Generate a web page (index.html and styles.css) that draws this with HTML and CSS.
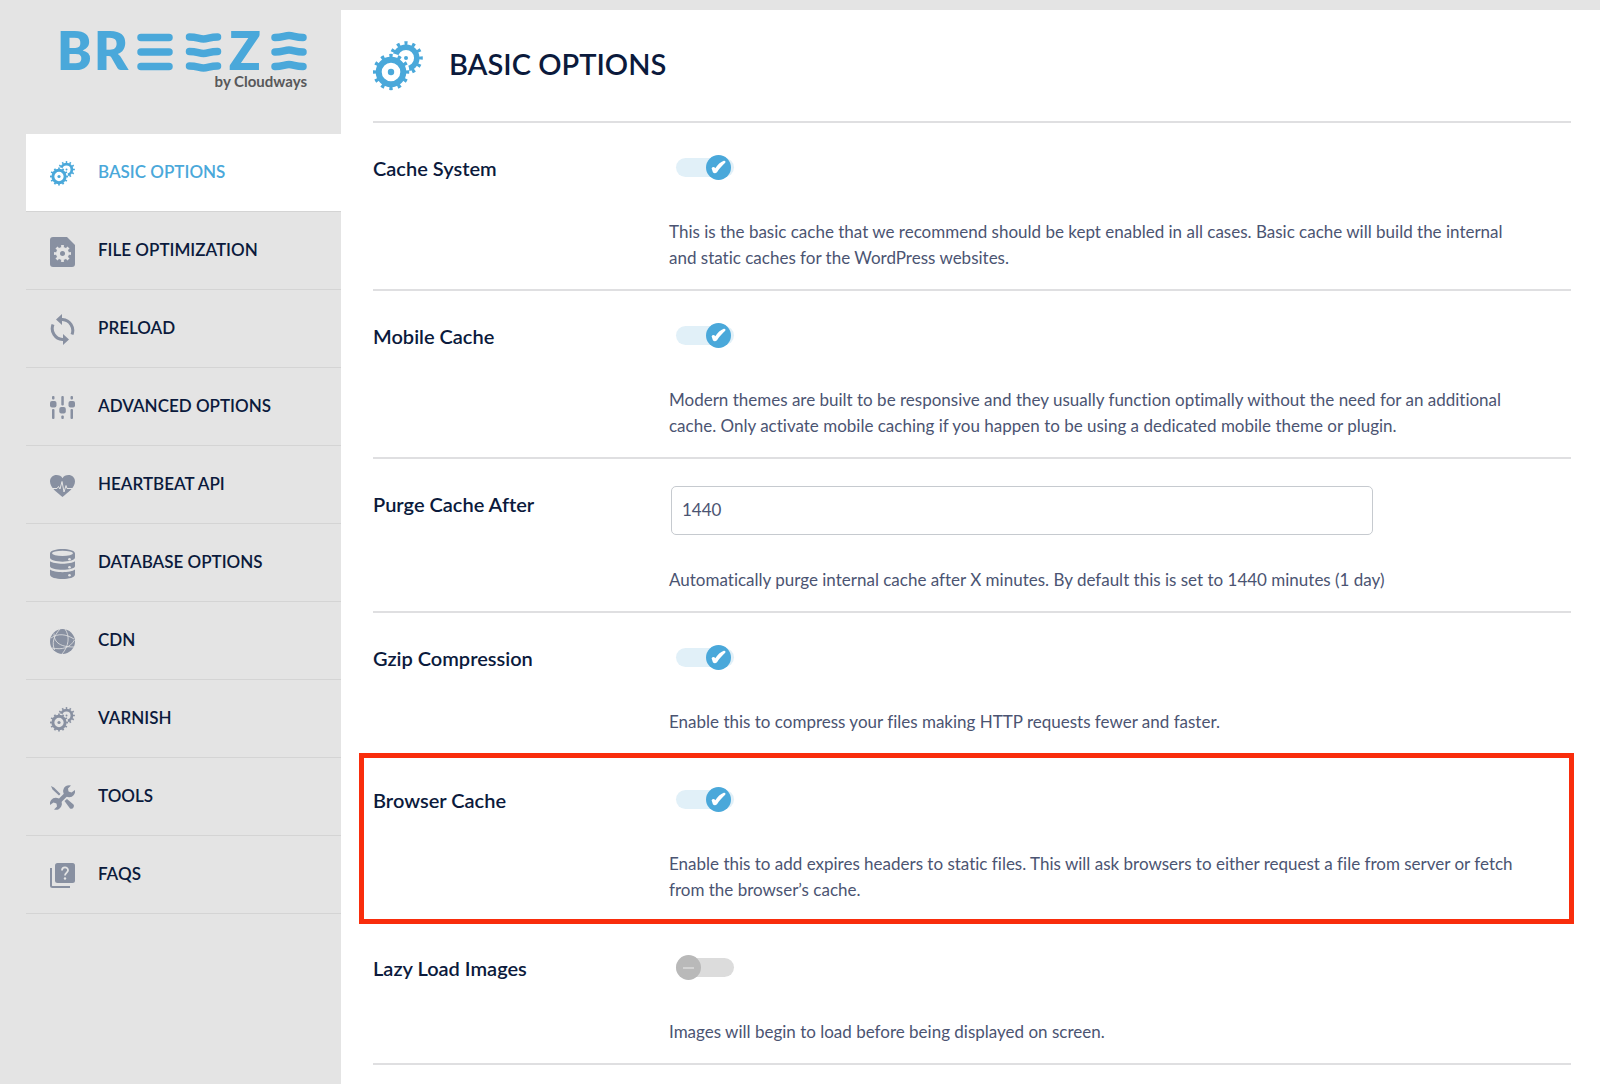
FILE: index.html
```html
<!DOCTYPE html>
<html lang="en">
<head>
<meta charset="utf-8">
<meta name="viewport" content="width=device-width, initial-scale=1">
<title>Breeze – Basic Options</title>
<link rel="stylesheet" href="styles.css">
</head>
<body>
<svg class="sprite" aria-hidden="true">
  <defs>
    <mask id="gear-gap" maskUnits="userSpaceOnUse" x="0" y="0" width="50" height="50">
      <rect width="50" height="50" fill="#fff"/>
      <circle cx="18" cy="31" r="18.500" fill="#000"/>
    </mask>
    <symbol id="gears" viewBox="0 0 50 50">
      <g fill="none" stroke="currentColor">
        <circle cx="18" cy="31" r="12.300" stroke-width="6"/>
        <circle cx="18" cy="31" r="16.200" stroke-width="4" pathLength="120" stroke-dasharray="4 6" stroke-dashoffset="2"/>
        <g mask="url(#gear-gap)">
          <circle cx="33" cy="17" r="10.800" stroke-width="5.500"/>
          <circle cx="33" cy="17" r="14.800" stroke-width="4" pathLength="120" stroke-dasharray="4 6" stroke-dashoffset="2"/>
        </g>
      </g>
      <circle cx="18" cy="31" r="3.200" fill="currentColor"/>
      <circle cx="33" cy="17" r="2" fill="currentColor"/>
    </symbol>
    <symbol id="knob-on" viewBox="0 0 25 25">
      <circle cx="12.500" cy="12.500" r="12.500" fill="#4aa8da"/>
      <path d="M5.600 13.200C6.500 11.600 8.300 11.500 9.300 13.300C11.700 9.500 14.500 7.200 17.800 5.800C19.200 5.400 20 6.600 19.200 7.700C16 10.500 13.500 13.500 11 17.200C9.700 18.800 7.800 18.700 6.900 17.200Z" fill="#fff"/>
    </symbol>
    <symbol id="knob-off" viewBox="0 0 25 25">
      <circle cx="12.500" cy="12.500" r="12.500" fill="#b9b9b9"/>
      <path d="M7 13H18" stroke="#dcdcdc" stroke-width="1.500"/>
    </symbol>
  </defs>
</svg>
<div class="layout">
  <aside class="sidebar">
    <a class="logo" href="#" aria-label="Breeze by Cloudways">
      <svg class="logo-mark" viewBox="0 0 250 42" width="250" height="42" aria-hidden="true">
        <g class="logo-letters">
          <text x="-3" y="38">B</text>
          <text x="34" y="38">R</text>
          <text x="169" y="38">Z</text>
        </g>
        <g fill="none" stroke="#4aa8da" stroke-width="7.500" stroke-linecap="round">
          <path d="M81 5.500H109M81 20H109M81 34.500H109"/>
          <path d="M129.500 5C137 5 139 7 143.500 7S150 5 157.500 5M129.500 19.500C137 19.500 139 21.500 143.500 21.500S150 19.500 157.500 19.500M129.500 34C137 34 139 36 143.500 36S150 34 157.500 34"/>
          <path d="M215 5.500C222.500 5.500 224.500 3.500 229 3.500S235.500 5.500 243 5.500M215 20C222.500 20 224.500 18 229 18S235.500 20 243 20M215 34.500C222.500 34.500 224.500 32.500 229 32.500S235.500 34.500 243 34.500"/>
        </g>
      </svg>
      <span class="logo-by">by Cloudways</span>
    </a>
    <nav class="nav">
      <a class="nav-item active" href="#basic"><svg class="icon" width="25" height="25"><use href="#gears"/></svg><span>BASIC OPTIONS</span></a>
      <a class="nav-item" href="#file"><svg class="icon" viewBox="0 0 25 30" width="25" height="30"><path fill="currentColor" d="M3 0H17L25 8V27A3 3 0 0 1 22 30H3A3 3 0 0 1 0 27V3A3 3 0 0 1 3 0Z"/><circle cx="12.500" cy="16.500" r="4.500" fill="none" stroke="#e4e4e4" stroke-width="4"/><circle cx="12.500" cy="16.500" r="7" fill="none" stroke="#e4e4e4" stroke-width="3" pathLength="80" stroke-dasharray="5 5" stroke-dashoffset="2.500"/></svg><span>FILE OPTIMIZATION</span></a>
      <a class="nav-item" href="#preload"><svg class="icon" viewBox="0 0 25 31" width="25" height="31"><g fill="none" stroke="currentColor" stroke-width="3"><path d="M11 5.500H12.500A11 11 0 0 1 22 20.500"/><path d="M14 25.500H12.500A11 11 0 0 1 3 10.500"/></g><path fill="currentColor" d="M12 0V11L6 5.500ZM13 20V31L19 25.500Z"/></svg><span>PRELOAD</span></a>
      <a class="nav-item" href="#advanced"><svg class="icon" viewBox="0 0 25 23" width="25" height="23"><g fill="currentColor"><rect x="2" width="2.500" height="3.500" rx="1"/><rect y="5" width="6.500" height="6.500" rx="2"/><rect x="2" y="13" width="2.500" height="10" rx="1"/><rect x="11.300" width="2.500" height="9.500" rx="1"/><rect x="9.300" y="11" width="6.500" height="6.500" rx="2"/><rect x="11.300" y="19.500" width="2.500" height="3.500" rx="1"/><rect x="20.500" width="2.500" height="3.500" rx="1"/><rect x="18.500" y="5" width="6.500" height="6.500" rx="2"/><rect x="20.500" y="13" width="2.500" height="10" rx="1"/></g></svg><span>ADVANCED OPTIONS</span></a>
      <a class="nav-item" href="#heartbeat"><svg class="icon" viewBox="0 0 25 22" width="25" height="22"><path fill="currentColor" d="M12.500 22C8 18 0 13 0 6.500C0 2.500 3 0 6.500 0C9 0 11.500 1.200 12.500 3.200C13.500 1.200 16 0 18.500 0C22 0 25 2.500 25 6.500C25 13 17 18 12.500 22Z"/><path fill="none" stroke="#e4e4e4" stroke-width="1" d="M2 13.500H7L8.500 11.500L10 14L12 6.500L14 17L16 10.500L17 13.500H23"/></svg><span>HEARTBEAT API</span></a>
      <a class="nav-item" href="#database"><svg class="icon" viewBox="0 0 25 30" width="25" height="30"><path fill="currentColor" d="M0 4.500C0 -1.500 25 -1.500 25 4.500V8.500C25 14 0 14 0 8.500ZM0 12.200C4 15.500 21 15.500 25 12.200V17C25 22 0 22 0 17ZM0 20.500C4 24 21 24 25 20.500V25.500C25 31.500 0 31.500 0 25.500Z"/><ellipse cx="12.500" cy="4.300" rx="10.500" ry="2.600" fill="#e4e4e4"/><g fill="#e4e4e4"><circle cx="19.500" cy="10.300" r="1.300"/><circle cx="19.500" cy="18.300" r="1.300"/><circle cx="19.500" cy="26.300" r="1.300"/></g></svg><span>DATABASE OPTIONS</span></a>
      <a class="nav-item" href="#cdn"><svg class="icon" viewBox="0 0 25 25" width="25" height="25"><circle cx="12.500" cy="12.500" r="12.500" fill="currentColor"/><g fill="none" stroke="#e4e4e4" stroke-width=".8"><path d="M1 9C8 4 16 5 24 10M4 4.500C4 12 8 18 24 18M15 0C20 7 19 17 12 25M10 0C3 8 2 14 4.500 21M2 19C12 21 20 19 24.500 11"/></g></svg><span>CDN</span></a>
      <a class="nav-item" href="#varnish"><svg class="icon" width="25" height="25"><use href="#gears"/></svg><span>VARNISH</span></a>
      <a class="nav-item" href="#tools"><svg class="icon" viewBox="0 0 25 25" width="25" height="25"><path fill="currentColor" d="M1 1L4 2.500L10.500 9L9 10.500L2.500 4.500ZM14.500 16L17 14L23.500 19.500C25 21.500 22.500 25 20 23.500Z"/><path d="M7 18.500L18.500 7" stroke="currentColor" stroke-width="4"/><path fill="currentColor" d="M21 .500A6 6 0 1 0 25 5L21.500 7.500L18.500 6.500L18 3.500ZM4 24.500A6 6 0 1 0 0 20L3.500 17.500L6.500 18.500L7 21.500Z"/></svg><span>TOOLS</span></a>
      <a class="nav-item" href="#faqs"><svg class="icon" viewBox="0 0 25 25" width="25" height="25"><rect x="5" width="20" height="20" rx="2.500" fill="currentColor"/><path d="M1 5V22.500Q1 24 2.500 24H20" fill="none" stroke="currentColor" stroke-width="2"/><path d="M12 7.500C12 3.500 18 3.500 18 7.300C18 9.500 15 9.700 15 12.500" fill="none" stroke="#e4e4e4" stroke-width="1.800"/><circle cx="15" cy="15.500" r="1.200" fill="#e4e4e4"/></svg><span>FAQS</span></a>
    </nav>
  </aside>
  <main class="main">
    <header class="page-head">
      <svg class="page-icon" width="50" height="50" aria-hidden="true"><use href="#gears"/></svg>
      <h1>BASIC OPTIONS</h1>
    </header>
    <form class="options">
      <div class="row">
        <label class="row-label" for="cache-system">Cache System</label>
        <div class="row-body">
          <span class="toggle"><input type="checkbox" id="cache-system" checked><svg class="knob" width="25" height="25"><use href="#knob-on"/></svg></span>
          <p>This is the basic cache that we recommend should be kept enabled in all cases. Basic cache will build the internal<br>and static caches for the WordPress websites.</p>
        </div>
      </div>
      <div class="row">
        <label class="row-label" for="mobile-cache">Mobile Cache</label>
        <div class="row-body">
          <span class="toggle"><input type="checkbox" id="mobile-cache" checked><svg class="knob" width="25" height="25"><use href="#knob-on"/></svg></span>
          <p>Modern themes are built to be responsive and they usually function optimally without the need for an additional<br>cache. Only activate mobile caching if you happen to be using a dedicated mobile theme or plugin.</p>
        </div>
      </div>
      <div class="row">
        <label class="row-label" for="purge-after">Purge Cache After</label>
        <div class="row-body">
          <input class="field" type="text" id="purge-after" value="1440">
          <p>Automatically purge internal cache after X minutes. By default this is set to 1440 minutes (1 day)</p>
        </div>
      </div>
      <div class="row">
        <label class="row-label" for="gzip">Gzip Compression</label>
        <div class="row-body">
          <span class="toggle"><input type="checkbox" id="gzip" checked><svg class="knob" width="25" height="25"><use href="#knob-on"/></svg></span>
          <p>Enable this to compress your files making HTTP requests fewer and faster.</p>
        </div>
      </div>
      <div class="row highlighted">
        <label class="row-label" for="browser-cache">Browser Cache</label>
        <div class="row-body">
          <span class="toggle"><input type="checkbox" id="browser-cache" checked><svg class="knob" width="25" height="25"><use href="#knob-on"/></svg></span>
          <p>Enable this to add expires headers to static files. This will ask browsers to either request a file from server or fetch<br>from the browser’s cache.</p>
        </div>
      </div>
      <div class="row">
        <label class="row-label" for="lazy-load">Lazy Load Images</label>
        <div class="row-body">
          <span class="toggle"><input type="checkbox" id="lazy-load"><svg class="knob" width="25" height="25"><use href="#knob-off"/></svg></span>
          <p>Images will begin to load before being displayed on screen.</p>
        </div>
      </div>
    </form>
  </main>
</div>
</body>
</html>
```
FILE: styles.css
```css
*, *::before, *::after { box-sizing: border-box; }

body {
  margin: 0;
  background: #e4e4e4;
  color: #0b1a3c;
  font-family: Lato, "Open Sans", sans-serif;
  font-size: 17px;
  font-variant-ligatures: no-common-ligatures;
  line-height: 26px;
}

.sprite { position: absolute; width: 0; height: 0; }

.layout {
  display: grid;
  grid-template-columns: 341px minmax(0, 1fr);
  min-height: 100vh;
  padding-top: 10px;
}

/* Sidebar */
.sidebar { padding-left: 26px; }

.logo {
  display: flex;
  flex-direction: column;
  align-items: flex-end;
  height: 124px;
  padding: 22px 34px 0 0;
  text-decoration: none;
}
.logo-mark {
  display: block;
  margin-right: -3px;
  overflow: visible;
}
.logo-letters {
  fill: #4aa8da;
  font-size: 52px;
  font-weight: 800;
}
.logo-by {
  color: #58585a;
  font-size: 15px;
  font-weight: 700;
  line-height: 14px;
}

.nav-item {
  display: flex;
  align-items: center;
  gap: 23px;
  height: 78px;
  padding: 0 24px;
  border-bottom: 1px solid #d4d4d4;
  color: #0b1a3c;
  font-weight: 600;
  text-decoration: none;
}
.nav-item.active { background: #fff; color: #4aa8da; }
.nav-item span { padding-bottom: 2px; }
.icon { flex: none; margin-top: 2px; color: #8890a1; }
.active .icon { color: #4aa8da; }

/* Main panel */
.main {
  padding: 0 29px 19px 32px;
  background: #fff;
}
.page-head {
  display: flex;
  align-items: center;
  gap: 26px;
  height: 113px;
  border-bottom: 2px solid #dfdfe1;
}
.page-icon { color: #4aa8da; }
h1 {
  margin: 0;
  padding-bottom: 4px;
  font-size: 29px;
  font-weight: 600;
  line-height: 36px;
}

.row {
  display: grid;
  grid-template-columns: 296px minmax(0, 1fr);
  padding: 27px 0 18px;
  border-bottom: 2px solid #dfdfe1;
}
.row-label {
  padding-top: 5px;
  font-size: 20px;
  font-weight: 600;
}
.row-body {
  display: flex;
  flex-direction: column;
  align-items: flex-start;
  gap: 32px;
}
.row-body p { margin: 0; color: #4b5472; }

.toggle {
  display: grid;
  align-items: center;
  width: 58px;
  margin: 5px 7px 7px;
}
.toggle input {
  grid-area: 1 / 1;
  appearance: none;
  width: 58px;
  height: 19px;
  margin: 0;
  border-radius: 10px;
  background: #dcdcdc;
}
.toggle input:checked { background: #e1f0f8; }
.knob {
  grid-area: 1 / 1;
  position: relative;
  pointer-events: none;
}
.toggle input:checked + .knob { margin-left: 30px; }

.field {
  width: 100%;
  max-width: 702px;
  height: 49px;
  margin-left: 2px;
  padding: 0 10px 2px;
  border: 1px solid #c6cacf;
  border-radius: 5px;
  background: #fff;
  color: #4b5472;
  font: inherit;
}

/* Frame drawn around the highlighted option */
.highlighted { position: relative; }
.highlighted::after {
  content: "";
  position: absolute;
  inset: -2px -3px -3px -14px;
  border: 5px solid #f92d0c;
  pointer-events: none;
}
```
